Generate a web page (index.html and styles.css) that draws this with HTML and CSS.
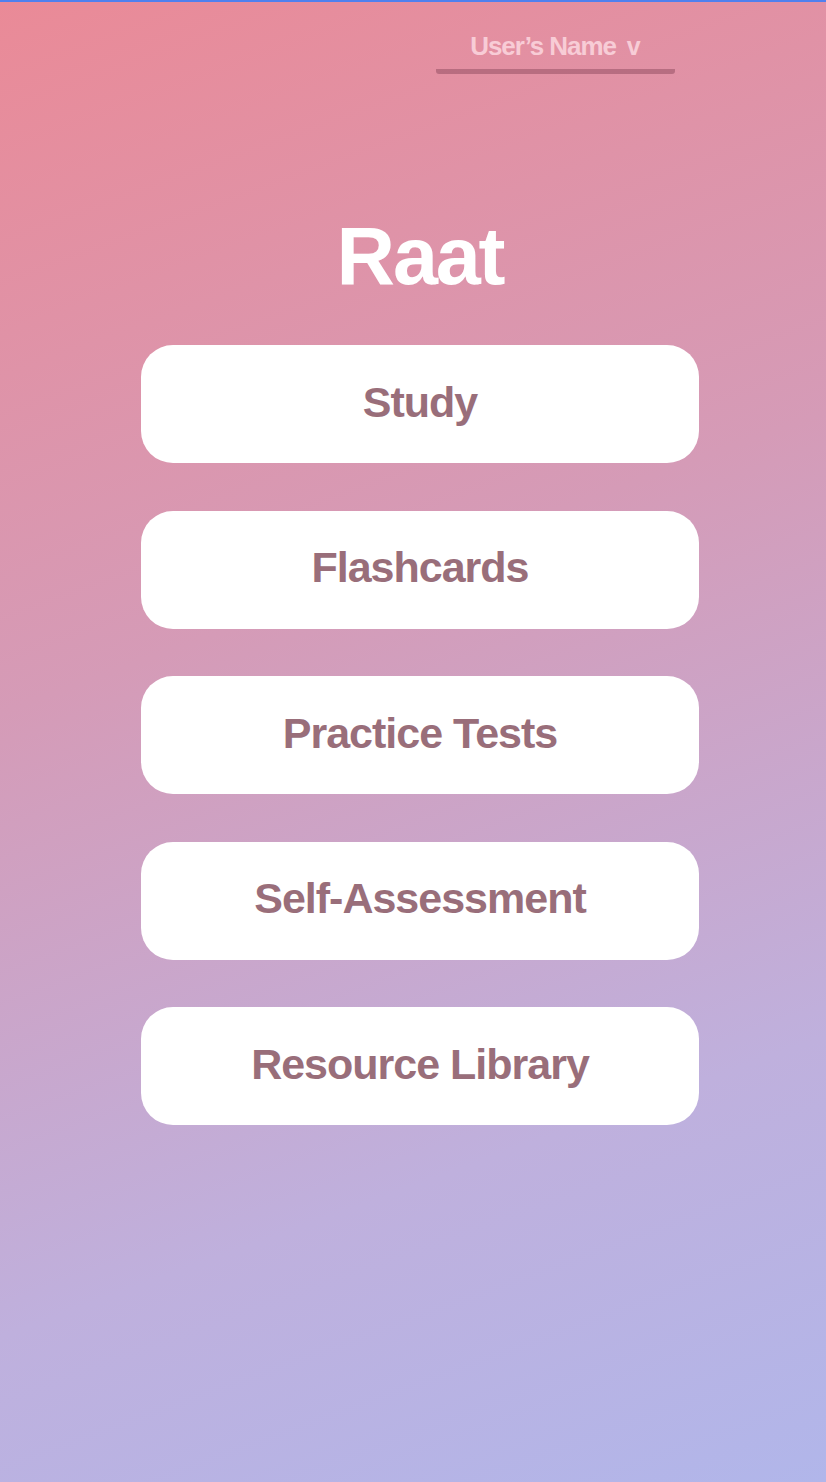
FILE: index.html
```html
<!DOCTYPE html>
<html lang="en">
<head>
<meta charset="utf-8">
<title>Raat</title>
<link rel="stylesheet" href="styles.css">
</head>
<body>
<div class="page">
  <header class="top">
    <div class="user">
      <span class="user-name">User’s Name</span><span class="caret">v</span>
    </div>
  </header>
  <main class="main">
    <h1 class="title">Raat</h1>
    <nav class="menu">
      <a class="btn" href="#">Study</a>
      <a class="btn" href="#">Flashcards</a>
      <a class="btn" href="#">Practice Tests</a>
      <a class="btn" href="#">Self-Assessment</a>
      <a class="btn" href="#">Resource Library</a>
    </nav>
  </main>
</div>
</body>
</html>
```
FILE: styles.css
```css
html, body {
  margin: 0;
  padding: 0;
}
body {
  font-family: "Liberation Sans", Arial, sans-serif;
  min-height: 1482px;
  background: linear-gradient(160deg, #ea8a97 0%, #d59bb7 40%, #bfb0dd 75%, #b1b6ea 100%);
}
.page {
  border-top: 2px solid #4f80ef;
  min-height: 1480px;
  box-sizing: border-box;
  display: flex;
  flex-direction: column;
  align-items: center;
  padding-left: 14px;
}
.top {
  align-self: stretch;
  display: flex;
  justify-content: flex-end;
  padding-right: 151px;
  padding-top: 29px;
}
.user {
  width: 239px;
  display: flex;
  justify-content: center;
  align-items: baseline;
  gap: 11px;
  padding-bottom: 8px;
  border-bottom: 5px solid rgba(150, 80, 100, 0.55);
  border-radius: 3px;
  color: rgba(255, 225, 232, 0.75);
  font-weight: bold;
  font-size: 26px;
  letter-spacing: -1.1px;
  line-height: 30px;
}
.caret {
  letter-spacing: 0;
  font-size: 25px;
}
.main {
  display: flex;
  flex-direction: column;
  align-items: center;
}
.title {
  margin: 137px 0 0;
  color: #ffffff;
  font-size: 81px;
  font-weight: bold;
  letter-spacing: -2.2px;
  line-height: 90px;
}
.menu {
  margin-top: 44px;
  display: flex;
  flex-direction: column;
  gap: 47.5px;
}
.btn {
  width: 558px;
  height: 118px;
  box-sizing: border-box;
  padding-bottom: 4px;
  border-radius: 32px;
  background: #ffffff;
  display: flex;
  align-items: center;
  justify-content: center;
  text-decoration: none;
  color: #996e7a;
  font-weight: bold;
  font-size: 43px;
  letter-spacing: -1px;
}
```
